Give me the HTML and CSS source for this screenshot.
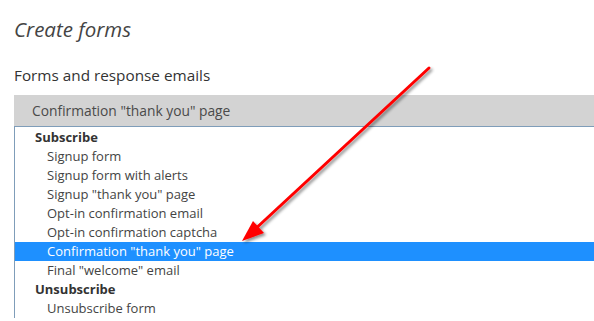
FILE: index.html
```html
<!DOCTYPE html>
<html lang="en">
<head>
  <meta charset="UTF-8" />
  <title>Create forms</title>
  <link rel="stylesheet" href="styles.css">
</head>
<body>
  <div class="page">
    <h1>Create forms</h1>
    <h2>Forms and response emails</h2>

    <div class="picker">
      <div class="picker-current">Confirmation "thank you" page</div>
      <ul class="picker-list">
        <li class="group">Subscribe</li>
        <li>Signup form</li>
        <li>Signup form with alerts</li>
        <li>Signup "thank you" page</li>
        <li>Opt-in confirmation email</li>
        <li>Opt-in confirmation captcha</li>
        <li class="selected">Confirmation "thank you" page</li>
        <li>Final "welcome" email</li>
        <li class="group">Unsubscribe</li>
        <li>Unsubscribe form</li>
      </ul>
    </div>
  </div>

  <!-- annotation arrow -->
  <svg class="arrow" width="594" height="321" viewBox="0 0 594 321">
    <defs>
      <filter id="shadow" x="-20%" y="-20%" width="140%" height="140%">
        <feDropShadow dx="2" dy="2" stdDeviation="1.6" flood-color="#000" flood-opacity="0.45"/>
      </filter>
    </defs>
    <g filter="url(#shadow)">
      <line x1="429" y1="68" x2="252" y2="232" stroke="#f00" stroke-width="3" stroke-linecap="round"/>
      <polygon points="242,241 253,221 264,233" fill="#f00"/>
    </g>
  </svg>
</body>
</html>
```

FILE: styles.css
```css
* { margin: 0; padding: 0; box-sizing: border-box; }
body {
  font-family: 'Open Sans', 'Noto Sans', sans-serif;
  background: #fff;
  color: #444;
  overflow: hidden;
}
.page { padding: 15px 0 0 14px; }
h1 {
  font-size: 20.5px; font-weight: normal; font-style: italic;
  color: #444; line-height: 28px;
}
h2 {
  font-size: 15.3px; font-weight: normal; color: #333;
  margin-top: 22px; line-height: 20px;
}
.picker { margin-top: 10px; }
.picker-current {
  background: #d3d3d3;
  height: 32px; line-height: 31px;
  padding-left: 18px;
  font-size: 13.8px; color: #4a4a4a;
  border-bottom: 1px solid #7f9db9;
}
.picker-list {
  list-style: none;
  border-left: 1px solid #7f9db9;
  padding-top: 1px;
}
.picker-list li {
  font-size: 13px; line-height: 19px; height: 19px;
  padding-left: 32px; color: #444;
}
.picker-list li.group { font-weight: bold; padding-left: 20px; color: #333; }
.picker-list li.selected { background: #1e90ff; color: #fff; }
.arrow { position: absolute; left: 0; top: 0; pointer-events: none; }
```
